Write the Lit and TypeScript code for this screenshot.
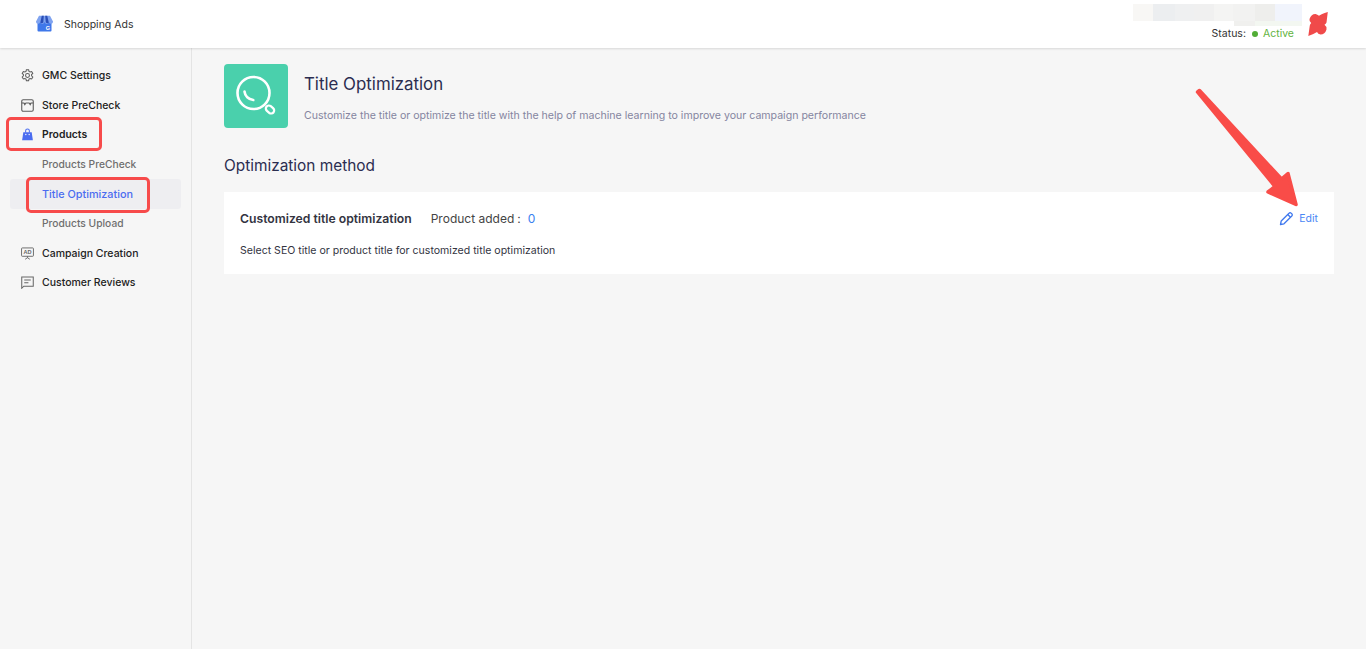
import { LitElement, html, css, svg } from "lit";
import { customElement } from "lit/decorators.js";

const gear = svg`<svg class="ic" viewBox="0 0 14 14" fill="none" stroke="#5c5c5c" stroke-width="1.100"><path d="M5.800 .8h2.400l.4 1.700 1.200.7 1.700-.5 1.200 2.100-1.300 1.200v1.400l1.300 1.200-1.200 2.100-1.700-.5-1.200.7-.4 1.700H5.800l-.4-1.700-1.200-.7-1.700.5-1.200-2.100 1.300-1.200V6L1.300 4.800l1.200-2.100 1.700.5 1.200-.7z"/><circle cx="7" cy="7" r="2.100"/></svg>`;
const store = svg`<svg class="ic" viewBox="0 0 14 14" fill="none" stroke="#5c5c5c" stroke-width="1.200"><rect x=".8" y=".8" width="12.400" height="12.400" rx="1.500"/><path d="M.8 4.300h2.400l.9 1.700 1.200-1.700h3.400L9.900 6l.9-1.700h2.400"/></svg>`;
const bag = svg`<svg class="ic" viewBox="0 0 14 14"><path fill="#4a6cf0" d="M2.500 4.500h9l1.300 8.700H1.200z"/><path fill="none" stroke="#4a6cf0" stroke-width="1.100" d="M5 5V3a2 2 0 0 1 4 0V5"/><circle cx="5.200" cy="7" r=".7" fill="#fff"/><circle cx="8.800" cy="7" r=".7" fill="#fff"/></svg>`;
const ad = svg`<svg class="ic" viewBox="0 0 14 14" fill="none" stroke="#666" stroke-width="1"><rect x=".6" y="1" width="12.800" height="9" rx=".8"/><path d="M7 10v1.500M4.500 13.200l2.500-1.700 2.500 1.700"/><text x="7" y="8" font-size="6" font-family="Liberation Sans" font-weight="700" text-anchor="middle" fill="#666" stroke="none">AD</text></svg>`;
const review = svg`<svg class="ic" viewBox="0 0 14 14" fill="none" stroke="#666" stroke-width="1.100"><path d="M.8 1h12.400v10H3L.8 13.200z"/><path d="M3.500 4.300h7M3.500 7.300h4.500"/></svg>`;

const shades: [string, number][] = [
  ["#f8f7f5", 20], ["#eceef0", 22], ["#eff0f1", 19], ["#f0f0f0", 20],
  ["#f4f4f3", 19], ["#f2f2f1", 22], ["#eeeeec", 20], ["#f1f4fc", 27],
];

@customElement("app-root")
export class AppRoot extends LitElement {
  static styles = css`
    :host { display: block; height: 649px; overflow: hidden; position: relative; background: #f6f6f6;
      font-family: Inter, "Noto Sans", sans-serif; color: #2a2a35; }
    .top { height: 48px; background: #fff; box-shadow: 0 1px 2px rgba(0,0,0,.12); display: flex; align-items: center;
      justify-content: space-between; padding: 0 36px 0 36px; position: relative; box-sizing: border-box; }
    .brand { display: flex; align-items: center; gap: 11px; font-size: 10.5px; color: #333; }
    .brand svg { width: 17px; height: 17px; margin-top: -1px; }
    .acct { display: flex; align-items: flex-end; gap: 14px; align-self: stretch; padding-bottom: 7px; }
    .status { font-size: 10.5px; display: flex; align-items: center; line-height: 16px; color: #333; margin-bottom: -1px; }
    .dot { width: 6px; height: 6px; border-radius: 50%; background: #52ad36; margin: 0 5px 0 6px; }
    .active { color: #62b33e; }
    .logo { width: 24px; height: 28px; margin-bottom: 3px; margin-left: -2px; }
    .body { display: flex; height: 601px; }
    .side { width: 192px; border-right: 1px solid #e4e4e4; padding: 13px 10px 0; flex: none; box-sizing: border-box; }
    .item { display: flex; align-items: center; height: 29.6px; box-sizing: border-box; padding-left: 11px; gap: 8px; font-size: 10.5px; font-weight: 500; color: #222; border-radius: 3px; }
    .item.on { font-weight: 600; font-size: 10.4px; }
    .ic { width: 13px; height: 13px; flex: none; }
    .sub { padding-left: 32px; padding-bottom: 1px; color: #6e6e6e; font-size: 10.25px; }
    .sub.sel { background: #eeeef1; color: #4a6cf0; font-size: 10.85px; padding-bottom: 0; }
    main { flex: 1; padding: 16px 32px 0; min-width: 0; }
    .head { display: flex; gap: 16px; }
    .tile { width: 64px; height: 64px; background: #4ad0ac; border-radius: 4px; flex: none; display: flex; align-items: center; justify-content: center; }
    .tile svg { width: 64px; height: 64px; }
    .head h1 { margin: 8px 0 0; font-size: 16.85px; font-weight: 400; line-height: 24px; color: #2b2d50; }
    .head p { margin: 12px 0 0; font-size: 10.58px; line-height: 16px; color: #8585a0; }
    h2 { margin: 27px 0 0; font-size: 15.4px; line-height: 22px; font-weight: 400; color: #2b2d50; }
    .card { margin-top: 15px; height: 82px; background: #fff; padding: 0 16px; box-sizing: border-box; }
    .row { display: flex; align-items: center; height: 52px; font-size: 12px; }
    .row b { font-weight: 600; color: #33343f; font-size: 12.2px; }
    .pa { margin-left: 19px; color: #444; font-size: 12px; }
    .colon { margin-left: 3px; margin-right: 7px; color: #444; }
    .num { color: #3a7ff0; }
    .edit { margin-left: auto; display: flex; align-items: center; gap: 5px; font-size: 10.5px; color: #4b86f5; }
    .edit svg { width: 15px; height: 15px; }
    .desc { margin: -1px 0 0; font-size: 10.57px; line-height: 16px; color: #33343f; }
    .blur { position: absolute; left: 1133px; top: 4px; width: 169px; height: 17px; display: flex; }
    .blur2 { position: absolute; left: 1234px; top: 21px; width: 68px; height: 5px; display: flex; }
    .blur2 i:first-child { flex: 21; background: #f0f0ee; }
    .blur2 i:last-child { flex: 47; background: #f3f7f1; }
    .mark { position: absolute; border: 3px solid #f74b4b; border-radius: 5px; box-sizing: border-box; pointer-events: none; }
    .m1 { left: 6px; top: 117px; width: 96px; height: 34px; }
    .m2 { left: 26px; top: 177px; width: 124px; height: 36px; }
    .arrow { position: absolute; left: 1190px; top: 85px; width: 120px; height: 130px; pointer-events: none; }
  `;

  render() {
    return html`
      <div class="top">
        <div class="brand">
          <svg viewBox="0 0 17 17"><path fill="#3f78ea" d="M1.500 7h14v8.500a1 1 0 0 1-1 1h-12a1 1 0 0 1-1-1z"/><path fill="#7fa3f0" d="M3 .8h11L17 6.500a2.100 2.100 0 0 1-4.200.3 2.100 2.100 0 0 1-4.300 0 2.100 2.100 0 0 1-4.300 0A2.100 2.100 0 0 1 0 6.500z"/><path fill="#2a4fb8" d="M5.800.8h2L7.300 7.500a2.100 2.100 0 0 1-3 0zM9.200.8h2l1.600 6.700a2.100 2.100 0 0 1-3 0z"/><text x="12" y="14.800" font-size="5.500" font-weight="700" text-anchor="middle" fill="#fff" font-family="Liberation Sans">G</text></svg>
          <span>Shopping Ads</span>
        </div>
        <div class="acct">
          <div class="status">Status:<span class="dot"></span><span class="active">Active</span></div>
          <svg class="logo" viewBox="0 0 24 28"><path fill="#f04a4a" d="M21.800 2 20.500 12.500Q20 14 18.500 14.800 21 16.500 20.500 19.500 19 24.500 14.500 24.500 12 24 11 22 8 24 2.300 26L3.800 15.500Q4 14 5.200 13 3 11.500 3.500 9 5.500 3.800 9.500 4 11.500 4.500 13 5.800 15 4 21.800 2z"/></svg>
        </div>
      </div>
      <div class="blur">${shades.map(([c, w]) => html`<i style="background:${c};width:${w}px"></i>`)}</div>
      <div class="blur2"><i></i><i></i></div>
      <div class="body">
        <nav class="side">
          <div class="item">${gear}GMC Settings</div>
          <div class="item">${store}Store PreCheck</div>
          <div class="item on">${bag}Products</div>
          <div class="item sub">Products PreCheck</div>
          <div class="item sub sel">Title Optimization</div>
          <div class="item sub">Products Upload</div>
          <div class="item">${ad}Campaign Creation</div>
          <div class="item">${review}Customer Reviews</div>
        </nav>
        <main>
          <div class="head">
            <div class="tile">
              <svg viewBox="0 0 64 64" fill="none" stroke="#fff" stroke-width="2.600"><circle cx="29.500" cy="29" r="16"/><path d="M20.500 27.500c.5 4.500 4 8 8.800 8.500" stroke-linecap="round"/><rect x="-4.500" y="-3" width="9" height="6" rx="3" transform="translate(46 45.500) rotate(40)" stroke-width="2.300"/></svg>
            </div>
            <div>
              <h1>Title Optimization</h1>
              <p>Customize the title or optimize the title with the help of machine learning to improve your campaign performance</p>
            </div>
          </div>
          <h2>Optimization method</h2>
          <div class="card">
            <div class="row">
              <b>Customized title optimization</b>
              <span class="pa">Product added</span><span class="colon">:</span><span class="num">0</span>
              <span class="edit"><svg viewBox="0 0 15 15" fill="none" stroke="#3f78ee" stroke-width="1.300" stroke-linejoin="round"><path d="M1.500 13.500l.7-3.500 7.800-7.800a1.500 1.500 0 0 1 2.200 0l.6.6a1.500 1.500 0 0 1 0 2.200L5 12.800z"/><path d="M8.700 3.500l2.800 2.800"/></svg>Edit</span>
            </div>
            <p class="desc">Select SEO title or product title for customized title optimization</p>
          </div>
        </main>
      </div>
      <div class="mark m1"></div>
      <div class="mark m2"></div>
      <svg class="arrow" viewBox="0 0 120 130"><path fill="#f94c48" stroke="#f94c48" stroke-width="3.500" stroke-linejoin="round" d="M7.500 7 9.500 5.500 91.500 94 98 88.500 106 119.500 78 107 85 101.500z"/></svg>
    `;
  }
}
